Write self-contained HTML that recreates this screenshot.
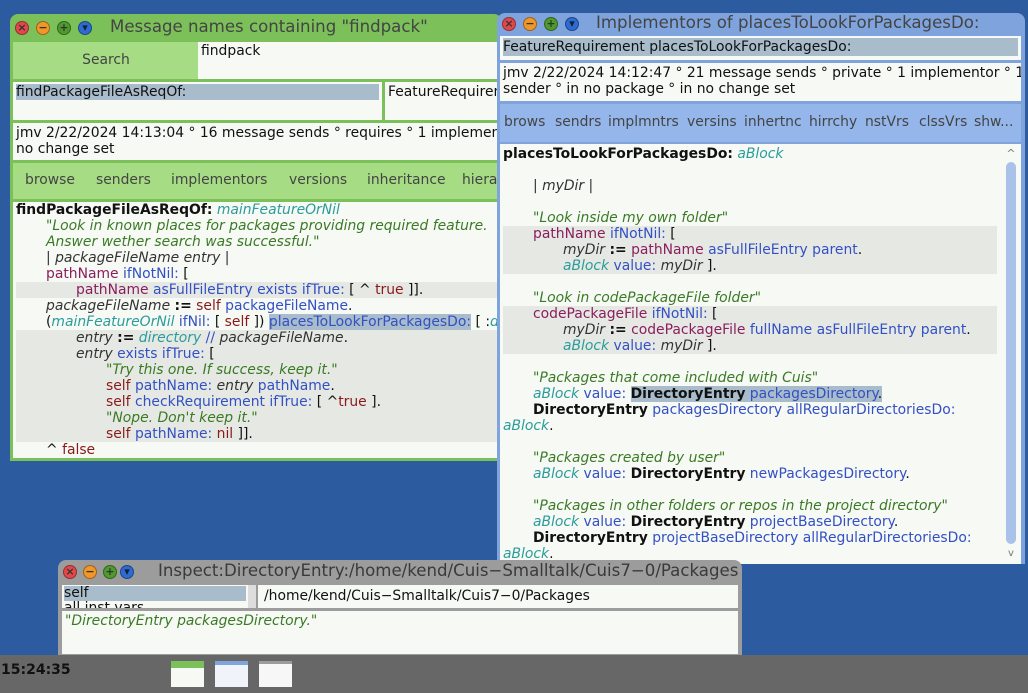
<!DOCTYPE html>
<html><head><meta charset="utf-8"><style>
*{margin:0;padding:0;box-sizing:border-box}
body{width:1028px;height:693px;background:#2c5b9f;position:relative;overflow:hidden;font-family:"DejaVu Sans","Liberation Sans",sans-serif;font-size:13.9px;color:#111}
.a{position:absolute}
.win{position:absolute;border-radius:8px 8px 0 0}
.btn{position:absolute;width:14px;height:14px;border-radius:50%;border:1px solid rgba(0,0,0,.35);font-size:11px;line-height:12px;text-align:center;color:#333;font-weight:bold}
.r{background:#e2484a}.o{background:#f0972a}.g{background:#4f9a2c}.b{background:#2e6bd0;color:#123}
.title{position:absolute;font-size:16.6px;color:#444;white-space:nowrap}
.pane{position:absolute;background:#f7f9f4;overflow:hidden;white-space:nowrap}
.l{height:16px;line-height:16px;white-space:pre}
.c{color:#3a7a26;font-style:italic}
.k{color:#3350c4}
.v{color:#8a1e5e}
.t{color:#2a9c9c;font-style:italic}
.s{color:#8a1a1a}
.i{font-style:italic;color:#333}
.B{font-weight:bold}
.sel{background:#a9bccb}
.sh{background:#e6e9e3}
</style></head><body>

<!-- green window -->
<div class="win" style="left:10px;top:14px;width:492px;height:447px;background:#7cc05a">
 <div class="btn r" style="left:5px;top:7px">×</div>
 <div class="btn o" style="left:26px;top:7px">−</div>
 <div class="btn g" style="left:47px;top:7px">+</div>
 <div class="btn b" style="left:68px;top:7px">▾</div>
 <div class="title" style="left:100px;top:3px">Message names containing "findpack"</div>
 <div class="a" style="left:3px;top:28px;width:186px;height:37px;background:#a6dc84;text-align:center;line-height:36px;color:#444">Search</div>
 <div class="pane" style="left:188px;top:28px;width:304px;height:37px;padding:1px 3px">findpack</div>
 <div class="pane" style="left:3px;top:68px;width:369px;height:38px;padding:2px 3px"><div class="sel" style="height:16px;line-height:16px">findPackageFileAsReqOf:</div></div>
 <div class="pane" style="left:375px;top:68px;width:117px;height:38px;padding:2px 3px;line-height:16px">FeatureRequirement</div>
 <div class="pane" style="left:3px;top:109px;width:489px;height:37px;padding:2px 3px;line-height:16px">jmv 2/22/2024 14:13:04 ° 16 message sends ° requires ° 1 implementor<br>no change set</div>
 <div class="a" style="left:3px;top:149px;width:489px;height:36px;background:#a6dc84;line-height:34px;color:#444;white-space:nowrap">
  <span style="position:absolute;left:12px">browse</span><span style="position:absolute;left:83px">senders</span><span style="position:absolute;left:158px">implementors</span><span style="position:absolute;left:276px">versions</span><span style="position:absolute;left:354px">inheritance</span><span style="position:absolute;left:449px">hierarchy</span></div>
 <div class="pane" style="left:3px;top:188px;width:489px;height:256px;padding:0 0 0 3px">
  <div class="l"><span class="B">findPackageFileAsReqOf:</span> <span class="t">mainFeatureOrNil</span></div>
  <div class="l" style="padding-left:30px"><span class="c">"Look in known places for packages providing required feature.</span></div>
  <div class="l" style="padding-left:30px"><span class="c">Answer wether search was successful."</span></div>
  <div class="l" style="padding-left:30px"><span class="i">| packageFileName entry |</span></div>
  <div class="l" style="padding-left:30px"><span class="v">pathName</span> <span class="k">ifNotNil:</span> [</div>
  <div class="l sh" style="padding-left:60px"><span class="v">pathName</span> <span class="k">asFullFileEntry exists ifTrue:</span> [ ^ <span class="s">true</span> ]].</div>
  <div class="l" style="padding-left:30px"><span class="i">packageFileName</span> <b>:=</b> <span class="s">self</span> <span class="k">packageFileName</span>.</div>
  <div class="l" style="padding-left:30px">(<span class="t">mainFeatureOrNil</span> <span class="k">ifNil:</span> [ <span class="s">self</span> ]) <span class="k sel">placesToLookForPackagesDo:</span> [ :<span class="t">directory</span> |</div>
  <div class="l sh" style="padding-left:60px"><span class="i">entry</span> <b>:=</b> <span class="t">directory</span> <span class="k">//</span> <span class="i">packageFileName</span>.</div>
  <div class="l sh" style="padding-left:60px"><span class="i">entry</span> <span class="k">exists ifTrue:</span> [</div>
  <div class="l sh" style="padding-left:90px"><span class="c">"Try this one. If success, keep it."</span></div>
  <div class="l sh" style="padding-left:90px"><span class="s">self</span> <span class="k">pathName:</span> <span class="i">entry</span> <span class="k">pathName</span>.</div>
  <div class="l sh" style="padding-left:90px"><span class="s">self</span> <span class="k">checkRequirement ifTrue:</span> [ ^<span class="s">true</span> ].</div>
  <div class="l sh" style="padding-left:90px"><span class="c">"Nope. Don't keep it."</span></div>
  <div class="l sh" style="padding-left:90px"><span class="s">self</span> <span class="k">pathName:</span> <span class="s">nil</span> ]].</div>
  <div class="l" style="padding-left:30px">^ <span class="s">false</span></div>
 </div>
</div>

<!-- blue window -->
<div class="win" style="left:497px;top:13px;width:528px;height:551px;background:#7fa3dc">
 <div class="btn r" style="left:5px;top:4px">×</div>
 <div class="btn o" style="left:26px;top:4px">−</div>
 <div class="btn g" style="left:47px;top:4px">+</div>
 <div class="btn b" style="left:68px;top:4px">▾</div>
 <div class="title" style="left:99px;top:0px">Implementors of placesToLookForPackagesDo:</div>
 <div class="pane" style="left:3px;top:23px;width:521px;height:24px;padding:2px 3px"><div class="sel" style="height:18px;line-height:18px">FeatureRequirement placesToLookForPackagesDo:</div></div>
 <div class="pane" style="left:3px;top:50px;width:521px;height:38px;padding:2px 3px;line-height:16px">jmv 2/22/2024 14:12:47 ° 21 message sends ° private ° 1 implementor ° 1<br>sender ° in no package ° in no change set</div>
 <div class="a" style="left:3px;top:91px;width:521px;height:38px;background:#94b6ea;line-height:36px;color:#444;white-space:nowrap">
  <span style="position:absolute;left:4px">brows</span><span style="position:absolute;left:55px">sendrs</span><span style="position:absolute;left:108px">implmntrs</span><span style="position:absolute;left:187px">versins</span><span style="position:absolute;left:244px">inhertnc</span><span style="position:absolute;left:309px">hirrchy</span><span style="position:absolute;left:365px">nstVrs</span><span style="position:absolute;left:419px">clssVrs</span><span style="position:absolute;left:474px">shw...</span></div>
 <div class="pane" style="left:3px;top:131px;width:521px;height:420px;padding:2px 0 0 3px">
  <div class="l"><span class="B">placesToLookForPackagesDo:</span> <span class="t">aBlock</span></div>
  <div class="l"></div>
  <div class="l" style="padding-left:30px"><span class="i">| myDir |</span></div>
  <div class="l"></div>
  <div class="l" style="padding-left:30px"><span class="c">"Look inside my own folder"</span></div>
  <div class="l sh" style="padding-left:30px;margin-right:24px"><span class="v">pathName</span> <span class="k">ifNotNil:</span> [</div>
  <div class="l sh" style="padding-left:60px;margin-right:24px"><span class="i">myDir</span> <b>:=</b> <span class="v">pathName</span> <span class="k">asFullFileEntry parent</span>.</div>
  <div class="l sh" style="padding-left:60px;margin-right:24px"><span class="t">aBlock</span> <span class="k">value:</span> <span class="i">myDir</span> ].</div>
  <div class="l"></div>
  <div class="l" style="padding-left:30px"><span class="c">"Look in codePackageFile folder"</span></div>
  <div class="l sh" style="padding-left:30px;margin-right:24px"><span class="v">codePackageFile</span> <span class="k">ifNotNil:</span> [</div>
  <div class="l sh" style="padding-left:60px;margin-right:24px"><span class="i">myDir</span> <b>:=</b> <span class="v">codePackageFile</span> <span class="k">fullName asFullFileEntry parent</span>.</div>
  <div class="l sh" style="padding-left:60px;margin-right:24px"><span class="t">aBlock</span> <span class="k">value:</span> <span class="i">myDir</span> ].</div>
  <div class="l"></div>
  <div class="l" style="padding-left:30px"><span class="c">"Packages that come included with Cuis"</span></div>
  <div class="l" style="padding-left:30px"><span class="t">aBlock</span> <span class="k">value:</span> <span class="sel"><span class="B">DirectoryEntry</span> <span class="k">packagesDirectory</span>.</span></div>
  <div class="l" style="padding-left:30px"><span class="B">DirectoryEntry</span> <span class="k">packagesDirectory allRegularDirectoriesDo:</span></div>
  <div class="l"><span class="t">aBlock</span>.</div>
  <div class="l"></div>
  <div class="l" style="padding-left:30px"><span class="c">"Packages created by user"</span></div>
  <div class="l" style="padding-left:30px"><span class="t">aBlock</span> <span class="k">value:</span> <span class="B">DirectoryEntry</span> <span class="k">newPackagesDirectory</span>.</div>
  <div class="l"></div>
  <div class="l" style="padding-left:30px"><span class="c">"Packages in other folders or repos in the project directory"</span></div>
  <div class="l" style="padding-left:30px"><span class="t">aBlock</span> <span class="k">value:</span> <span class="B">DirectoryEntry</span> <span class="k">projectBaseDirectory</span>.</div>
  <div class="l" style="padding-left:30px"><span class="B">DirectoryEntry</span> <span class="k">projectBaseDirectory allRegularDirectoriesDo:</span></div>
  <div class="l"><span class="t">aBlock</span>.</div>
 </div>
 <div class="a" style="left:507px;top:135px;width:14px;height:412px;background:#f7f9f4">
  <div class="a" style="left:0;top:0;width:14px;height:12px;font-size:11px;color:#777;text-align:center;line-height:12px">^</div>
  <div class="a" style="left:2px;top:14px;width:10px;height:382px;background:#a9c2ea;border-radius:5px"></div>
  <div class="a" style="left:0;top:400px;width:14px;height:12px;font-size:10px;color:#777;text-align:center;line-height:12px">v</div>
 </div>
</div>

<!-- inspector -->
<div class="win" style="left:58px;top:560px;width:684px;height:96px;background:#9c9c9c">
 <div class="btn r" style="left:5px;top:5px">×</div>
 <div class="btn o" style="left:25px;top:5px">−</div>
 <div class="btn g" style="left:45px;top:5px">+</div>
 <div class="btn b" style="left:62px;top:5px">▾</div>
 <div class="title" style="left:100px;top:1px;color:#3a3a3a">Inspect:DirectoryEntry:/home/kend/Cuis−Smalltalk/Cuis7−0/Packages</div>
 <div class="pane" style="left:4px;top:25px;width:186px;height:23px;padding:1px 2px;line-height:15px"><div class="sel">self</div><div>all inst vars</div></div>
 <div class="a" style="left:190px;top:25px;width:8px;height:23px;background:#ddd"></div>
 <div class="pane" style="left:200px;top:25px;width:480px;height:23px;padding:2px 6px;line-height:18px">/home/kend/Cuis−Smalltalk/Cuis7−0/Packages</div>
 <div class="pane" style="left:4px;top:51px;width:676px;height:43px;padding:2px 3px;line-height:16px"><span class="c">"DirectoryEntry packagesDirectory."</span></div>
</div>

<!-- taskbar -->
<div class="a" style="left:0;top:655px;width:1028px;height:38px;background:#676767"></div>
<div class="a" style="left:1px;top:662px;font-weight:bold;font-size:14px;color:#111">15:24:35</div>
<div class="a" style="left:171px;top:661px;width:33px;height:26px;background:#f7f9f4;border-top:7px solid #7cc05a"></div>
<div class="a" style="left:215px;top:661px;width:33px;height:26px;background:#f0f3fa;border-top:4px solid #7fa3dc"></div>
<div class="a" style="left:259px;top:661px;width:33px;height:26px;background:#f7f7f7;border-top:3px solid #9c9c9c"></div>
</body></html>
